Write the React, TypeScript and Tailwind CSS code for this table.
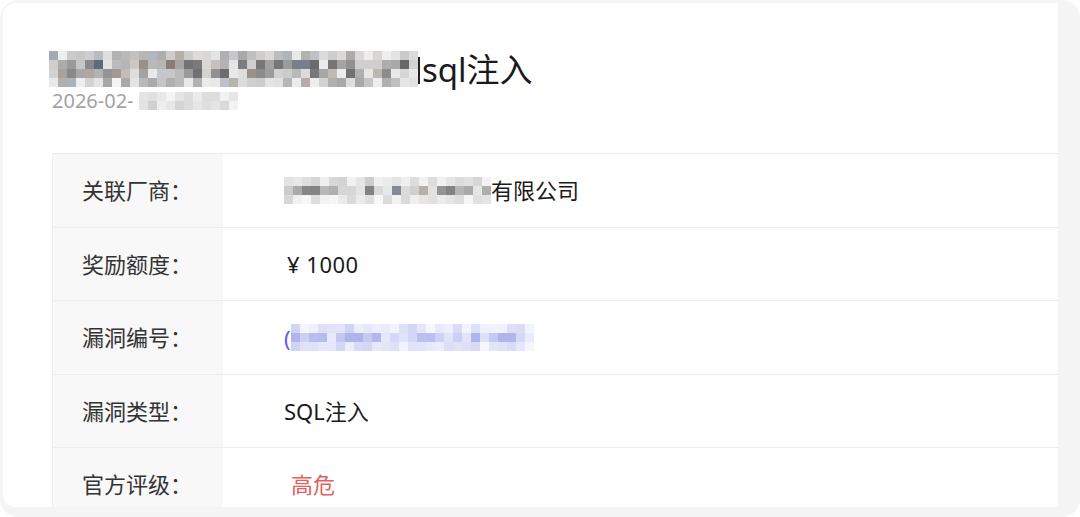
import React from "react";

function rng(seed: number) {
  let a = seed >>> 0;
  return () => {
    a = (a + 0x6d2b79f5) >>> 0;
    let t = a;
    t = Math.imul(t ^ (t >>> 15), t | 1);
    t ^= t + Math.imul(t ^ (t >>> 7), t | 61);
    return ((t ^ (t >>> 14)) >>> 0) / 4294967296;
  };
}

type Tone = "gray" | "blue";

function mix(a: number[], b: number[], t: number) {
  return `rgb(${Math.round(a[0] + (b[0] - a[0]) * t)},${Math.round(
    a[1] + (b[1] - a[1]) * t
  )},${Math.round(a[2] + (b[2] - a[2]) * t)})`;
}

function Mosaic({
  cols,
  rows,
  cell,
  seed,
  tone,
  rowRanges,
}: {
  cols: number;
  rows: number;
  cell: number;
  seed: number;
  tone: Tone;
  rowRanges: [number, number][];
}) {
  const r = rng(seed);
  const cells: string[] = [];
  for (let y = 0; y < rows; y++) {
    const [lo, hi] = rowRanges[y] ?? rowRanges[rowRanges.length - 1];
    for (let x = 0; x < cols; x++) {
      const t = lo + (hi - lo) * r();
      if (tone === "blue") {
        cells.push(mix([160, 166, 232], [246, 247, 254], t));
      } else {
        const tint = r();
        let dark = [92, 92, 94];
        const light = [248, 248, 248];
        if (tint < 0.18) dark = [96, 104, 118];
        else if (tint > 0.88) dark = [120, 108, 100];
        cells.push(mix(dark, light, t));
      }
    }
  }
  return (
    <div
      className="grid shrink-0"
      style={{
        gridTemplateColumns: `repeat(${cols}, ${cell}px)`,
        gridTemplateRows: `repeat(${rows}, ${cell}px)`,
      }}
    >
      {cells.map((c, i) => (
        <div key={i} style={{ background: c }} />
      ))}
    </div>
  );
}

const font = "font-['Noto_Sans','Noto_Sans_CJK_SC',sans-serif]";

function Row({
  label,
  children,
  h,
}: {
  label: string;
  children: React.ReactNode;
  h: string;
}) {
  return (
    <div className={`flex border-t border-[#ececec] ${h}`}>
      <div className="w-[170px] shrink-0 bg-[#f8f8f8] pl-[29px] flex items-center text-[22px] text-[#333]">
        {label}
      </div>
      <div className="flex-1 pl-[61px] flex items-center text-[22px] text-[#1a1a1a]">
        {children}
      </div>
    </div>
  );
}

export default function App() {
  return (
    <div className={`w-[1080px] h-[517px] bg-white ${font}`}>
      <div className="w-full h-full rounded-[18px] bg-[#f4f4f4] pt-[3px] pl-[3px] pr-[22px] pb-[10px]">
        <div className="h-full bg-white rounded-l-[12px] overflow-hidden pl-[46px] pt-[45px]">
          <div className="flex items-center h-[42px]">
            <Mosaic
              cols={41}
              rows={4}
              cell={9}
              seed={7}
              tone="gray"
              rowRanges={[
                [0.45, 0.95],
                [0.0, 0.92],
                [0.05, 0.97],
                [0.45, 0.98],
              ]}
            />
            <div className="w-[2px] h-[27px] bg-[#222] mr-[2px] mt-[2px] shrink-0" />
            <span className="text-[33px] leading-none text-[#1a1a1a]">sql注入</span>
          </div>
          <div className="flex items-center h-[21px] pl-[3px]">
            <span className="text-[20px] leading-none text-[#a3a3a3]">2026-02-</span>
            <div className="ml-[5px]">
              <Mosaic
                cols={11}
                rows={2}
                cell={9}
                seed={21}
                tone="gray"
                rowRanges={[
                  [0.78, 1],
                  [0.72, 0.98],
                ]}
              />
            </div>
          </div>
          <div className="mt-[42px] ml-[3px] border-l border-[#f0f0f0]">
            <Row label="关联厂商：" h="h-[74px]">
              <Mosaic
                cols={23}
                rows={3}
                cell={9}
                seed={33}
                tone="gray"
                rowRanges={[
                  [0.7, 1],
                  [0.2, 0.98],
                  [0.78, 1],
                ]}
              />
              <span>有限公司</span>
            </Row>
            <Row label="奖励额度：" h="h-[73px]">
              <span className="pl-[3px] tracking-[0.5px]">¥ 1000</span>
            </Row>
            <Row label="漏洞编号：" h="h-[74px]">
              <div className="flex items-center">
                <span className="text-[#5a62e0] leading-none">(</span>
                <Mosaic
                  cols={27}
                  rows={3}
                  cell={9}
                  seed={45}
                  tone="blue"
                  rowRanges={[
                    [0.55, 1],
                    [0.15, 0.9],
                    [0.55, 1],
                  ]}
                />
              </div>
            </Row>
            <Row label="漏洞类型：" h="h-[73px]">
              <span>SQL注入</span>
            </Row>
            <Row label="官方评级：" h="h-[74px]">
              <span className="pl-[7px] text-[#e0615d]">高危</span>
            </Row>
          </div>
        </div>
      </div>
    </div>
  );
}
